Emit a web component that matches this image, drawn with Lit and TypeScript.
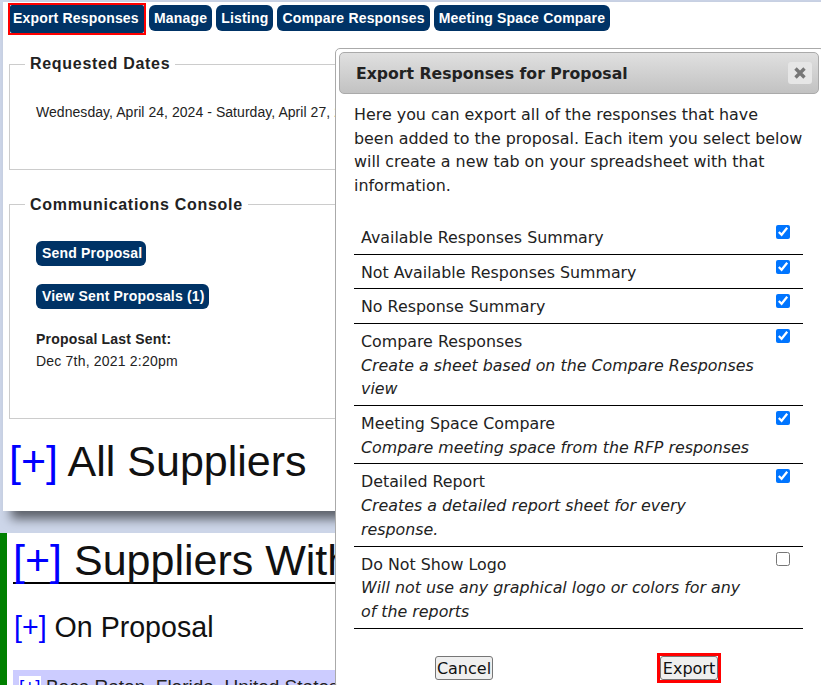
import { LitElement, html, css } from "lit";
import { customElement } from "lit/decorators.js";

const rows: [string, string, boolean][] = [
  ["Available Responses Summary", "", true],
  ["Not Available Responses Summary", "", true],
  ["No Response Summary", "", true],
  ["Compare Responses", "Create a sheet based on the Compare Responses view", true],
  ["Meeting Space Compare", "Compare meeting space from the RFP responses", true],
  ["Detailed Report", "Creates a detailed report sheet for every response.", true],
  ["Do Not Show Logo", "Will not use any graphical logo or colors for any of the reports", false],
];

@customElement("app-root")
export class AppRoot extends LitElement {
  static styles = css`
    :host { display: block; height: 685px; overflow: hidden; position: relative; background: #cdd6e9; font-family: "Liberation Sans", Arial, sans-serif; color: #222; }
    .panel-wrap { height: 511px; padding-top: 2px; box-sizing: border-box; }
    .panel { margin-left: 3px; height: 509px; background: #fff; box-shadow: 8px 8px 10px rgba(0,0,0,.55); padding: 1px 0 0 5px; box-sizing: border-box; overflow: hidden; }
    nav { display: flex; gap: 4px; height: 31px; align-items: flex-start; padding-top: 2px; box-sizing: border-box; }
    .btn { background: #003366; color: #fff; font-weight: bold; font-size: 14px; letter-spacing: .18px; border-radius: 6px; padding: 0 5px; height: 26px; line-height: 26px; white-space: nowrap; display: inline-block; }
    .focus { border: 2px solid #f00; margin: -2px -1px 0 0; display: flex; }
    .focus .btn { border-radius: 2px; height: 28px; line-height: 27px; padding: 0 4px 0 3px; width: 134px; box-sizing: border-box; }
    .fs { position: relative; margin: 0 0 0 1px; border: 1px solid #ccc; border-right: 0; box-sizing: border-box; }
    .fs h3 { position: absolute; top: -9px; left: 15px; margin: 0; padding: 0 5px; background: #fff; font-size: 16px; line-height: 18px; letter-spacing: .7px; color: #222; white-space: nowrap; }
    .dates h3 { top: -10px; }
    .dates { height: 106px; margin-top: 30px; padding: 38px 0 0 26px; font-size: 14px; letter-spacing: .05px; white-space: nowrap; line-height: 18px; }
    .comm { height: 215px; margin-top: 34px; padding: 36px 0 0 26px; font-size: 14px; }
    .comm .btn { height: 25px; line-height: 25px; display: table; margin-bottom: 18px; padding: 0 4px 0 6px; }
    .comm .btn + .btn { margin-bottom: 19px; }
    .sent { font-size: 14px; line-height: 22px; letter-spacing: .2px; }
    .sent b { display: block; color: #222; }
    .h-all { font-size: 43px; line-height: 50px; margin: 17px 0 0 1px; color: #111; white-space: nowrap; font-weight: normal; }
    a { color: #00f; text-decoration: none; }
    .lower { margin: 22px 0 0 0; height: 152px; background: #fff; border-left: 7px solid #008000; padding-left: 6px; overflow: hidden; }
    .h-with { font-size: 43px; line-height: 50px; font-weight: normal; margin: 0; color: #111; border-bottom: 2px solid #000; height: 51px; box-sizing: border-box; white-space: nowrap; padding: 2px 0 0 0; }
    .h-on { font-size: 28.6px; line-height: 34px; font-weight: normal; margin: 26px 0 0 1px; color: #111; white-space: nowrap; }
    .loc { margin-top: 26px; height: 30px; background: #ccf; font-size: 19px; line-height: 22px; white-space: nowrap; padding: 6px 0 0 6px; box-sizing: border-box; color: #222; }
    .loc a { background: #fff; }
    .modal { position: absolute; left: 335px; top: 48px; width: 490px; height: 640px; background: #fff; border: 1px solid #aaa; border-radius: 5px; padding: 3px; box-sizing: border-box; font-family: "DejaVu Sans", Verdana, sans-serif; }
    .title { width: 480px; height: 42px; box-sizing: border-box; border: 1px solid #aaa; border-radius: 5px; background: linear-gradient(#e0e0e0, #c2c2c2); display: flex; align-items: center; justify-content: space-between; padding: 0 6px 0 16px; font-weight: bold; font-size: 15.7px; color: #222; }
    .close { width: 24px; height: 22px; background: #e6e6e6; border-radius: 3px; display: flex; align-items: center; justify-content: center; }
    .body { padding: 9px 0 0 15px; width: 449px; font-size: 15.85px; line-height: 23.7px; color: #222; }
    .intro { margin: 0 0 22px; font-size: 15.9px; white-space: nowrap; }
    .row { display: flex; justify-content: space-between; border-bottom: 1px solid #000; padding: 6px 6px 4px 7px; box-sizing: border-box; }
    .row i { display: block; }
    .txt { width: 396px; }
    input[type=checkbox] { width: 14px; height: 14px; margin: -1px 7px 0 0; flex: none; }
    .actions { display: flex; align-items: flex-start; margin-top: 27px; }
    button { font: 16px "DejaVu Sans", Verdana, sans-serif; padding: 1px 0 0; height: 24px; background: #efefef; border: 1px solid #767676; border-radius: 3px; color: #111; box-sizing: border-box; width: 58px; }
    .cancel { margin-left: 81px; }
    .redbox { margin: -3px 0 0 164px; border: 3px solid #f00; display: flex; }
  `;

  render() {
    return html`
      <div class="panel-wrap"><div class="panel">
        <nav>
          <span class="focus"><span class="btn">Export Responses</span></span>
          <span class="btn">Manage</span>
          <span class="btn">Listing</span>
          <span class="btn">Compare Responses</span>
          <span class="btn">Meeting Space Compare</span>
        </nav>
        <div class="fs dates"><h3>Requested Dates</h3>Wednesday, April 24, 2024 - Saturday, April 27, 2024</div>
        <div class="fs comm"><h3>Communications Console</h3>
          <span class="btn">Send Proposal</span>
          <span class="btn">View Sent Proposals (1)</span>
          <div class="sent"><b>Proposal Last Sent:</b>Dec 7th, 2021 2:20pm</div>
        </div>
        <h1 class="h-all"><a>[+]</a> All Suppliers</h1>
      </div></div>
      <div class="lower">
        <h1 class="h-with"><a>[+]</a> Suppliers With</h1>
        <h2 class="h-on"><a>[+]</a> On Proposal</h2>
        <div class="loc"><a>[+]</a> Boca Raton, Florida, United States</div>
      </div>
      <div class="modal">
        <div class="title"><span>Export Responses for Proposal</span>
          <span class="close"><svg width="14" height="14" viewBox="0 0 14 14"><path d="M2.5 2.5l9 9M11.5 2.5l-9 9" stroke="#777" stroke-width="3.4"/></svg></span>
        </div>
        <div class="body">
          <p class="intro">Here you can export all of the responses that have<br />been added to the proposal. Each item you select below<br />will create a new tab on your spreadsheet with that<br />information.</p>
          ${rows.map(([t, d, c]) => html`<div class="row"><div class="txt">${t}${d ? html`<i>${d}</i>` : ""}</div><input type="checkbox" .checked=${c} /></div>`)}
          <div class="actions"><button class="cancel">Cancel</button><span class="redbox"><button>Export</button></span></div>
        </div>
      </div>
    `;
  }
}
